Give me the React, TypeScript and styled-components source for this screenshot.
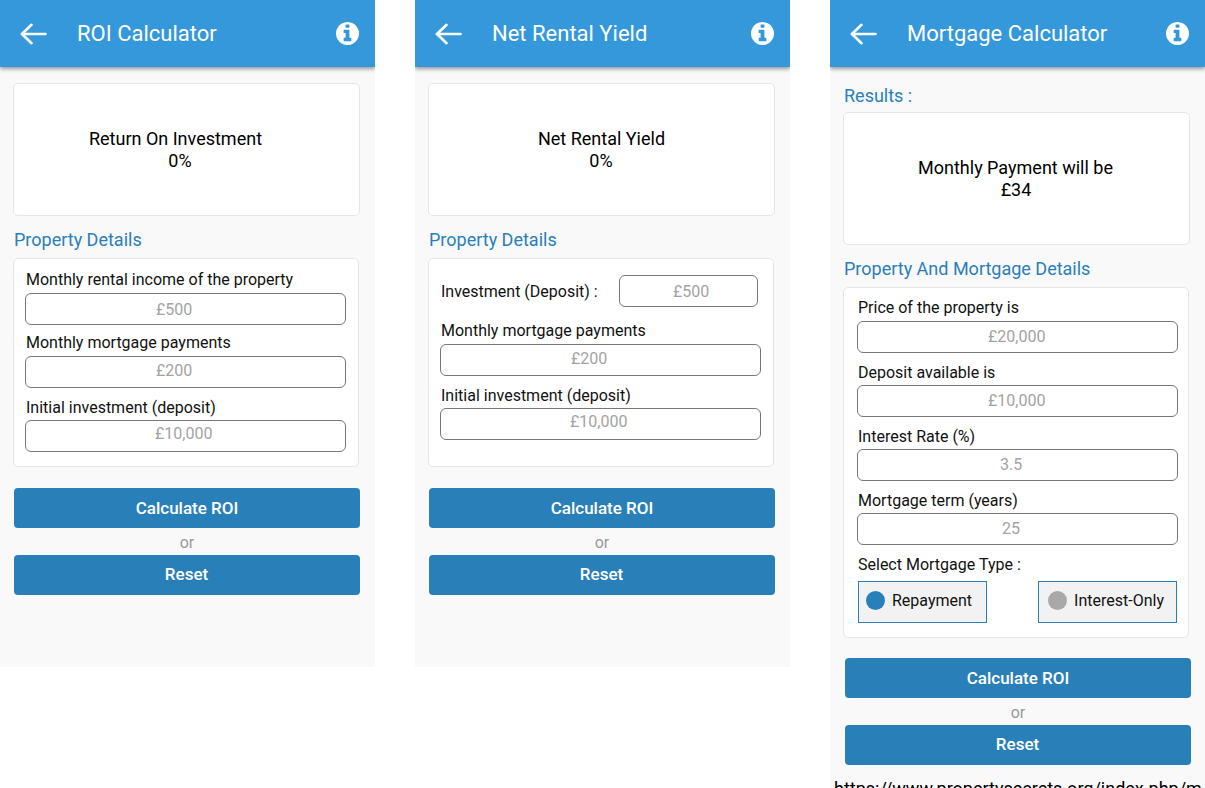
import React from "react";
import styled, { createGlobalStyle } from "styled-components";

const GlobalStyle = createGlobalStyle`
  html, body {
    margin: 0;
    padding: 0;
    height: 788px;
    overflow: hidden;
    background: #fff;
    font-family: Roboto, "Liberation Sans", sans-serif;
  }
  * { box-sizing: border-box; }
`;

type FieldData = {
  label: string;
  placeholder: string;
  indent: number;
  lift: number;
  labelLine?: number;
};

const roiFields: FieldData[] = [
  { label: "Monthly rental income of the property", placeholder: "£500", indent: 130, lift: 0 },
  { label: "Monthly mortgage payments", placeholder: "£200", indent: 130, lift: 4 },
  { label: "Initial investment (deposit)", placeholder: "£10,000", indent: 129, lift: 5, labelLine: 25 },
];

const yieldFields: FieldData[] = [
  { label: "Monthly mortgage payments", placeholder: "£200", indent: 130, lift: 4 },
  { label: "Initial investment (deposit)", placeholder: "£10,000", indent: 129, lift: 6, labelLine: 25 },
];

const mortgageFields: FieldData[] = [
  { label: "Price of the property is", placeholder: "£20,000", indent: 130, lift: 2 },
  { label: "Deposit available is", placeholder: "£10,000", indent: 130, lift: 2, labelLine: 25 },
  { label: "Interest Rate (%)", placeholder: "3.5", indent: 142, lift: 2, labelLine: 25 },
  { label: "Mortgage term (years)", placeholder: "25", indent: 144, lift: 2, labelLine: 25 },
];

const BackArrow = () => (
  <svg width="27" height="22" viewBox="0 0 27 22" fill="none" stroke="#fff" strokeWidth="2.6" strokeLinecap="round" strokeLinejoin="round">
    <path d="M2 11H25.5" />
    <path d="M11.5 1.8L2 11L11.5 20.2" />
  </svg>
);

const InfoIcon = () => (
  <svg width="23" height="23" viewBox="128 128 1536 1536" fill="#fff" fillRule="evenodd">
    <path d="M1152 1376v-160q0-14-9-23t-23-9h-96v-512q0-14-9-23t-23-9h-320q-14 0-23 9t-9 23v160q0 14 9 23t23 9h96v320h-96q-14 0-23 9t-9 23v160q0 14 9 23t23 9h448q14 0 23-9t9-23zm-128-896v-160q0-14-9-23t-23-9h-192q-14 0-23 9t-9 23v160q0 14 9 23t23 9h192q14 0 23-9t9-23zm640 416q0 209-103 385.5t-279.5 279.5-385.5 103-385.5-103-279.5-279.5-103-385.5 103-385.5 279.5-279.5 385.5-103 385.5 103 279.5 279.5 103 385.5z" />
  </svg>
);

const Field = ({ label, placeholder, indent, lift, labelLine }: FieldData) => (
  <FieldRow>
    <FieldLabel $line={labelLine}>{label}</FieldLabel>
    <TextInput $indent={indent} $lift={lift} placeholder={placeholder} readOnly />
  </FieldRow>
);

const Header = ({ title }: { title: string }) => (
  <TopBar>
    <BackButton>
      <BackArrow />
    </BackButton>
    <Title>{title}</Title>
    <InfoButton>
      <InfoIcon />
    </InfoButton>
  </TopBar>
);

const Actions = ({ top = 21, shift = 1 }: { top?: number; shift?: number }) => (
  <ActionGroup $top={top} $shift={shift}>
    <PrimaryButton>Calculate ROI</PrimaryButton>
    <OrText>or</OrText>
    <PrimaryButton $reset>Reset</PrimaryButton>
  </ActionGroup>
);

const App: React.FC = () => {
  return (
    <>
      <GlobalStyle />
      <Page>
        <Screen $short>
          <Header title="ROI Calculator" />
          <Content>
            <ResultCard $top={16}>
              <ResultLine $pad={22}>Return On Investment</ResultLine>
              <ResultLine $pad={13}>0%</ResultLine>
            </ResultCard>
            <SectionTitle>Property Details</SectionTitle>
            <DetailsCard $gap={6.4}>
              {roiFields.map((field) => (
                <Field key={field.label} {...field} />
              ))}
            </DetailsCard>
            <Actions />
          </Content>
        </Screen>

        <Screen $short>
          <Header title="Net Rental Yield" />
          <Content>
            <ResultCard $top={16}>
              <ResultLine $pad={0}>Net Rental Yield</ResultLine>
              <ResultLine $pad={1}>0%</ResultLine>
            </ResultCard>
            <SectionTitle>Property Details</SectionTitle>
            <DetailsCard $bottom={26}>
              <InlineRow>
                <FieldLabel $line={25}>Investment (Deposit) :</FieldLabel>
                <SmallInput placeholder="£500" readOnly />
              </InlineRow>
              {yieldFields.map((field) => (
                <Field key={field.label} {...field} />
              ))}
            </DetailsCard>
            <Actions />
          </Content>
        </Screen>

        <Screen>
          <Header title="Mortgage Calculator" />
          <Content>
            <ResultsHeading>Results :</ResultsHeading>
            <ResultCard $top={5}>
              <ResultLine $pad={2}>Monthly Payment will be</ResultLine>
              <ResultLine $pad={1}>£34</ResultLine>
            </ResultCard>
            <SectionTitle>Property And Mortgage Details</SectionTitle>
            <DetailsCard $top={8} $left={14} $right={11}>
              {mortgageFields.map((field) => (
                <Field key={field.label} {...field} />
              ))}
              <FieldLabel $line={25}>Select Mortgage Type :</FieldLabel>
              <TypeRow>
                <TypeOption $left={7}>
                  <Dot $active />
                  Repayment
                </TypeOption>
                <TypeOption $left={9}>
                  <Dot />
                  Interest-Only
                </TypeOption>
              </TypeRow>
            </DetailsCard>
            <Actions top={20} shift={2} />
            <PageUrl>https://www.propertysecrets.org/index.php/m</PageUrl>
          </Content>
        </Screen>
      </Page>
    </>
  );
};

export default App;

const Page = styled.div`
  display: flex;
  gap: 40px;
  width: 1205px;
  height: 788px;
  overflow: hidden;
`;

const Screen = styled.div<{ $short?: boolean }>`
  flex: 0 0 375px;
  width: 375px;
  height: ${(props) => (props.$short ? "667px" : "788px")};
  background: #f9f9f9;
  overflow: hidden;
`;

const TopBar = styled.div`
  position: relative;
  z-index: 1;
  display: flex;
  align-items: center;
  height: 67px;
  padding: 0 16px 0 20px;
  background: #3498db;
  box-shadow: 0 2px 4px rgba(0, 0, 0, 0.4);
`;

const BackButton = styled.div`
  display: flex;
  width: 57px;
`;

const Title = styled.div`
  flex: 1;
  color: #fff;
  font-size: 22px;
  line-height: 67px;
`;

const InfoButton = styled.div`
  display: flex;
`;

const Content = styled.div`
  display: flex;
  flex-direction: column;
  padding: 0 15px 0 13px;
`;

const ResultCard = styled.div<{ $top: number }>`
  display: flex;
  flex-direction: column;
  align-items: center;
  justify-content: center;
  width: 347px;
  height: 133px;
  margin-top: ${(props) => props.$top}px;
  background: #fff;
  border: 1px solid #e6e6e6;
  border-radius: 5px;
`;

const ResultLine = styled.span<{ $pad: number }>`
  padding-right: ${(props) => props.$pad}px;
  color: #000;
  font-size: 18px;
  line-height: 22px;
`;

const ResultsHeading = styled.div`
  margin: 18px 0 0 1px;
  color: #2980b9;
  font-size: 18px;
  line-height: 22px;
`;

const SectionTitle = styled.div`
  margin: 13px 0 7px 1px;
  color: #2980b9;
  font-size: 18px;
  line-height: 22px;
`;

const DetailsCard = styled.div<{
  $gap?: number;
  $top?: number;
  $left?: number;
  $right?: number;
  $bottom?: number;
}>`
  display: flex;
  flex-direction: column;
  gap: ${(props) => props.$gap ?? 7}px;
  width: 346px;
  padding: ${(props) => props.$top ?? 9}px ${(props) => props.$right ?? 12}px
    ${(props) => props.$bottom ?? 14}px ${(props) => props.$left ?? 12}px;
  background: #fff;
  border: 1px solid #e6e6e6;
  border-radius: 5px;
`;

const FieldRow = styled.div`
  display: flex;
  flex-direction: column;
`;

const FieldLabel = styled.label<{ $line?: number }>`
  display: block;
  height: 25px;
  color: #111;
  font-size: 16px;
  line-height: ${(props) => props.$line ?? 23}px;
`;

const TextInput = styled.input<{ $indent: number; $lift: number }>`
  width: 321px;
  height: 32px;
  margin-left: -1px;
  padding: 0 0 ${(props) => props.$lift}px ${(props) => props.$indent}px;
  background: #fff;
  border: 1px solid #777;
  border-radius: 6px;
  outline: none;
  font-family: inherit;
  font-size: 16px;

  &::placeholder {
    color: #a3a3a3;
    opacity: 1;
  }
`;

const InlineRow = styled.div`
  display: flex;
  align-items: center;
  justify-content: space-between;
  margin-bottom: 5px;
  padding: 7px 3px 0 0;
`;

const SmallInput = styled.input`
  width: 139px;
  height: 32px;
  padding: 0 0 0 53px;
  background: #fff;
  border: 1px solid #777;
  border-radius: 6px;
  outline: none;
  font-family: inherit;
  font-size: 16px;

  &::placeholder {
    color: #a3a3a3;
    opacity: 1;
  }
`;

const TypeRow = styled.div`
  display: flex;
  justify-content: space-between;
  margin-top: -3px;
`;

const TypeOption = styled.div<{ $left: number }>`
  display: flex;
  align-items: center;
  gap: 7px;
  height: 42px;
  padding: 0 ${(props) => 21 - props.$left}px 3px ${(props) => props.$left}px;
  background: #f2f2f2;
  border: 1px solid #2980b9;
  color: #111;
  font-size: 16px;
`;

const Dot = styled.span<{ $active?: boolean }>`
  width: 19px;
  height: 19px;
  border-radius: 50%;
  background: ${(props) => (props.$active ? "#2980b9" : "#a9a9a9")};
`;

const ActionGroup = styled.div<{ $top: number; $shift: number }>`
  display: flex;
  flex-direction: column;
  width: 346px;
  margin: ${(props) => props.$top}px 0 0 ${(props) => props.$shift}px;
`;

const PrimaryButton = styled.div<{ $reset?: boolean }>`
  display: flex;
  align-items: center;
  justify-content: center;
  height: 40px;
  padding: ${(props) => (props.$reset ? "0 1px 2px 0" : "0")};
  background: #2980b9;
  border-radius: 4px;
  color: #fff;
  font-size: 17px;
  font-weight: 500;
`;

const OrText = styled.div`
  height: 27px;
  color: #999;
  font-size: 16px;
  line-height: 30px;
  text-align: center;
`;

const PageUrl = styled.div`
  margin: 13px 0 0 -9px;
  color: #000;
  font-size: 18px;
  line-height: 22px;
  white-space: nowrap;
`;
